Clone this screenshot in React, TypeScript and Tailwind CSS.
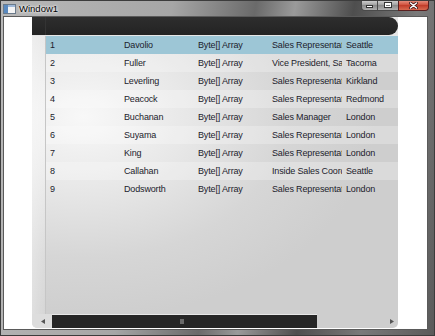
import React from "react";

const rows: string[][] = [
  ["1", "Davolio", "Byte[] Array", "Sales Representative", "Seattle"],
  ["2", "Fuller", "Byte[] Array", "Vice President, Sales", "Tacoma"],
  ["3", "Leverling", "Byte[] Array", "Sales Representative", "Kirkland"],
  ["4", "Peacock", "Byte[] Array", "Sales Representative", "Redmond"],
  ["5", "Buchanan", "Byte[] Array", "Sales Manager", "London"],
  ["6", "Suyama", "Byte[] Array", "Sales Representative", "London"],
  ["7", "King", "Byte[] Array", "Sales Representative", "London"],
  ["8", "Callahan", "Byte[] Array", "Inside Sales Coordinator", "Seattle"],
  ["9", "Dodsworth", "Byte[] Array", "Sales Representative", "London"],
];

const widths = ["w-[74px]", "w-[74px]", "w-[74px]", "w-[74px]", "w-[56px]"];

export default function App() {
  return (
    <div
      className="w-[435px] h-[336px] flex flex-col overflow-hidden border border-[#3c3c3c] bg-[linear-gradient(100deg,#b8b8b8_0%,#a6a6a6_35%,#6a6a6a_52%,#9a9a9a_60%,#4e4e4e_72%,#7a7a7a_85%,#5a5a5a_100%)]"
      style={{ fontFamily: '"Liberation Sans", Arial, sans-serif' }}
    >
      {/* Title bar */}
      <div className="h-[15px] flex items-start shrink-0 relative">
        <div className="ml-[2px] mt-[3px] flex items-center">
          <svg width="13" height="10" viewBox="0 0 13 10">
            <rect x="0.5" y="0.5" width="12" height="9" fill="#f4f4f4" stroke="#6a7a8a" />
            <rect x="1" y="1" width="4" height="8" fill="#5a8ac0" />
            <rect x="5" y="1" width="7" height="2" fill="#9fb8d8" />
          </svg>
          <span
            className="ml-[3px] text-[9.5px] leading-[10px] text-black"
            style={{ textShadow: "0 0 3px #fff, 0 0 2px #fff" }}
          >
            Window1
          </span>
        </div>
        <div className="ml-auto mr-[5px] flex h-[11px] -mt-[1px]">
          <div className="w-[17px] h-full rounded-bl-[4px] border border-[#4a4a4a] border-t-0 bg-[linear-gradient(#d8d8d8,#a0a0a0_50%,#888_51%,#b0b0b0)] flex items-center justify-center">
            <div className="w-[7px] h-[3px] mt-[3px] bg-white border border-[#333]" />
          </div>
          <div className="w-[20px] h-full border-b border-[#4a4a4a] bg-[linear-gradient(#d8d8d8,#a0a0a0_50%,#888_51%,#b0b0b0)] flex items-center justify-center">
            <div className="w-[8px] h-[6px] border border-[#333] bg-white">
              <div className="w-full h-full border border-white border-t-2 bg-[#777]" />
            </div>
          </div>
          <div className="w-[31px] h-full rounded-br-[4px] border border-[#5a2020] border-t-0 bg-[linear-gradient(#e89a8a,#d0503c_50%,#c03a28_51%,#d86a50)] flex items-center justify-center">
            <svg width="9" height="7" viewBox="0 0 9 7">
              <path d="M1.5 1 L7.5 6 M7.5 1 L1.5 6" stroke="#3a1010" strokeWidth="3" strokeLinecap="round" />
              <path d="M1.5 1 L7.5 6 M7.5 1 L1.5 6" stroke="#fff" strokeWidth="1.6" strokeLinecap="round" />
            </svg>
          </div>
        </div>
      </div>

      {/* Client area */}
      <div className="ml-[2px] mr-[6px] mb-[5px] flex-1 bg-white border border-[#5a5a5a] flex">
        <div
          className="ml-[28px] mt-[0px] w-[366px] h-[311px] flex flex-col rounded-b-[5px] overflow-hidden bg-[radial-gradient(ellipse_80%_65%_at_14%_32%,#f8f8f8_0%,#e8e8e8_35%,#d6d6d6_70%,#cecece_100%)] text-[#1c1c2c] text-[9px] tracking-[-0.15px]"
        >
          {/* header */}
          <div className="h-[19px] pb-[1px] shrink-0 bg-[#e6e6e6]">
            <div className="h-[18px] flex rounded-r-[9px] bg-[linear-gradient(#2e2e2e,#232323)]">
              <div className="w-[14px] h-full border-r border-[#343434]" />
            </div>
          </div>

          {/* body */}
          <div className="flex-1 flex min-h-0">
            <div className="w-[14px] shrink-0 border-r border-[#c6c6c6] bg-[linear-gradient(90deg,rgba(255,255,255,0.35),rgba(255,255,255,0.15))]" />
            <div className="flex-1 flex flex-col">
              {rows.map((r, i) => (
                <div
                  key={i}
                  className={
                    "h-[18px] flex items-center " +
                    (i === 0 ? "bg-[#9dc6d6]" : i % 2 === 1 ? "bg-white/25" : "")
                  }
                >
                  {r.map((c, j) => (
                    <div
                      key={j}
                      className={widths[j] + " shrink-0 pl-[4px] overflow-hidden whitespace-nowrap leading-[18px]"}
                    >
                      {c}
                    </div>
                  ))}
                </div>
              ))}
            </div>
          </div>

          {/* bottom scroll bar */}
          <div className="h-[14px] shrink-0 flex">
            <div className="w-[20px] h-full flex items-center pl-[9px] bg-[rgba(255,255,255,0.3)] rounded-bl-[5px]">
              <svg width="4" height="5" viewBox="0 0 4 5">
                <path d="M4 0 L0 2.5 L4 5 Z" fill="#555" />
              </svg>
            </div>
            <div className="w-[265px] h-full border-t border-[#e8e8e8] bg-[#262626] flex items-center">
              <div className="ml-[128px] w-[4px] h-[5px] bg-[#6a6a6a]" />
            </div>
            <div className="flex-1 h-full flex items-center justify-end pr-[4px]">
              <svg width="4" height="5" viewBox="0 0 4 5">
                <path d="M0 0 L4 2.5 L0 5 Z" fill="#555" />
              </svg>
            </div>
          </div>
        </div>
      </div>
    </div>
  );
}
